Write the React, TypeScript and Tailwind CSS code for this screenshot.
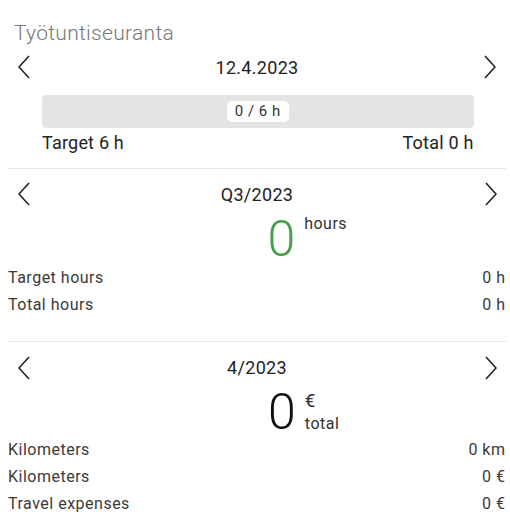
import React from 'react';

function Chevron({ dir }: { dir: 'left' | 'right' }) {
  return (
    <svg width="12" height="24" viewBox="0 0 12 24" fill="none" stroke="#222" strokeWidth="1.6">
      <polyline points={dir === 'left' ? '11,1 1,12 11,23' : '1,1 11,12 1,23'} />
    </svg>
  );
}

function NavRow({ label }: { label: string }) {
  return (
    <div className="flex h-[32px] items-center justify-between pl-[9.5px] pr-[9px]">
      <button className="flex items-center">
        <Chevron dir="left" />
      </button>
      <span className="text-[18px] tracking-[0.3px] text-[#222]">{label}</span>
      <button className="flex items-center">
        <Chevron dir="right" />
      </button>
    </div>
  );
}

function StatRow({ label, value }: { label: string; value: string }) {
  return (
    <div className="flex h-[27px] items-center justify-between text-[16px] tracking-[0.5px] text-[#3a3a3a]">
      <span>{label}</span>
      <span>{value}</span>
    </div>
  );
}

export default function App() {
  return (
    <div
      className="bg-white pl-2 pr-[4.5px]"
      style={{ fontFamily: 'Roboto, "Noto Sans", sans-serif' }}
    >
      {/* Daily */}
      <h1 className="pt-[19px] pl-[6px] text-[21px] font-light leading-[28px] tracking-[0.3px] text-[#777]">
        Työtuntiseuranta
      </h1>
      <div className="mt-[4px]">
        <NavRow label="12.4.2023" />
      </div>
      <div className="pl-[34px] pr-[32px]">
        <div className="mt-[12px] flex h-[33px] items-center justify-center rounded-[4px] bg-[#e4e4e4]">
          <span className="flex h-[21px] items-center rounded-[5px] bg-white px-[8px] text-[15px] tracking-[0.5px] text-[#333]">
            0 / 6 h
          </span>
        </div>
        <div className="flex h-[28px] items-center justify-between text-[18px] tracking-[0.2px] text-[#222]">
          <span>Target 6 h</span>
          <span>Total 0 h</span>
        </div>
      </div>
      <div className="mt-[12px] border-t border-[#e6e6e6]" />

      {/* Quarter */}
      <div className="mt-[9px]">
        <NavRow label="Q3/2023" />
      </div>
      <div className="mt-[4px] flex justify-center">
        <div className="ml-[101px] flex items-start">
          <span className="text-[50px] font-light leading-none text-[#43a047]">0</span>
          <span className="ml-[9px] text-[16px] leading-[20px] tracking-[0.5px] text-[#333]">hours</span>
        </div>
      </div>
      <StatRow label="Target hours" value="0 h" />
      <StatRow label="Total hours" value="0 h" />
      <div className="mt-[22.5px] border-t border-[#e6e6e6]" />

      {/* Month */}
      <div className="mt-[10px]">
        <NavRow label="4/2023" />
      </div>
      <div className="mt-[3px] flex justify-center">
        <div className="ml-[94px] flex items-stretch">
          <span className="text-[50px] font-light leading-none text-[#111]">0</span>
          <div className="ml-[9px] flex flex-col justify-between pt-[3px] pb-[3px] text-[#333]">
            <span className="text-[19px] leading-[22px]">€</span>
            <span className="text-[16px] leading-[20px] tracking-[0.5px]">total</span>
          </div>
        </div>
      </div>
      <StatRow label="Kilometers" value="0 km" />
      <StatRow label="Kilometers" value="0 €" />
      <StatRow label="Travel expenses" value="0 €" />
    </div>
  );
}
